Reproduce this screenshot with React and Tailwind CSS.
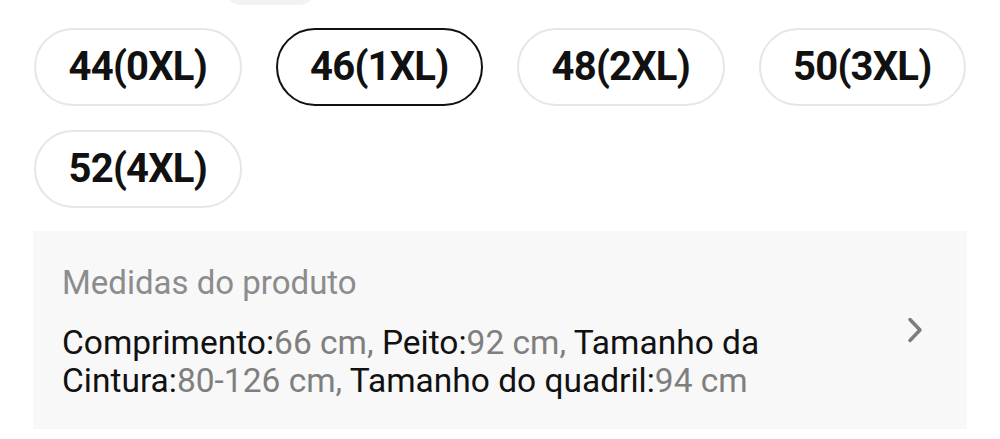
import React from "react";

const sizes = ["44(0XL)", "46(1XL)", "48(2XL)", "50(3XL)", "52(4XL)"];

export default function App() {
  return (
    <div className="w-[1000px] h-[439px] bg-white overflow-hidden" style={{ fontFamily: "Roboto, 'Noto Sans', sans-serif" }}>
      <div className="h-[5px] overflow-hidden flex items-end pl-[222px]">
        <div className="w-[96px] h-[40px] shrink-0 rounded-full bg-[#f2f2f2]" />
      </div>
      <div className="grid grid-cols-4 gap-x-[34px] gap-y-[24px] px-[34px] mt-[23px]">
        {sizes.map((s) => {
          const selected = s === "46(1XL)";
          return (
            <div
              key={s}
              className={
                selected
                  ? "h-[78px] rounded-full border-[2.5px] border-[#111] flex items-center justify-center text-[40px] font-bold text-[#111] tracking-[-0.8px]"
                  : "h-[78px] rounded-full border-2 border-[#e6e6e6] flex items-center justify-center text-[40px] font-bold text-[#111] tracking-[-0.8px]"
              }
            >
              {s}
            </div>
          );
        })}
      </div>
      <div className="mx-[33px] mt-[23px] h-[198px] bg-[#f8f8f8] pl-[29px] pr-[40px] pt-[33px] flex items-start">
        <div className="flex-1">
          <div className="text-[33px] leading-[38px] text-[#8c8c8c]">Medidas do produto</div>
          <div className="mt-[22px] text-[33.5px] leading-[38px] text-[#111]">
            Comprimento:<span className="text-[#7f7f7f]">66 cm,</span> Peito:<span className="text-[#7f7f7f]">92 cm,</span> Tamanho da
            <br />
            Cintura:<span className="text-[#7f7f7f]">80-126 cm,</span> Tamanho do quadril:<span className="text-[#7f7f7f]">94 cm</span>
          </div>
        </div>
        <svg className="mt-[53px] mr-[4px]" width="16" height="26" viewBox="0 0 16 26" fill="none">
          <path d="M3 2.5 L13 13 L3 23.5" stroke="#7d7d7d" strokeWidth="3.5" strokeLinecap="round" strokeLinejoin="round" />
        </svg>
      </div>
    </div>
  );
}
